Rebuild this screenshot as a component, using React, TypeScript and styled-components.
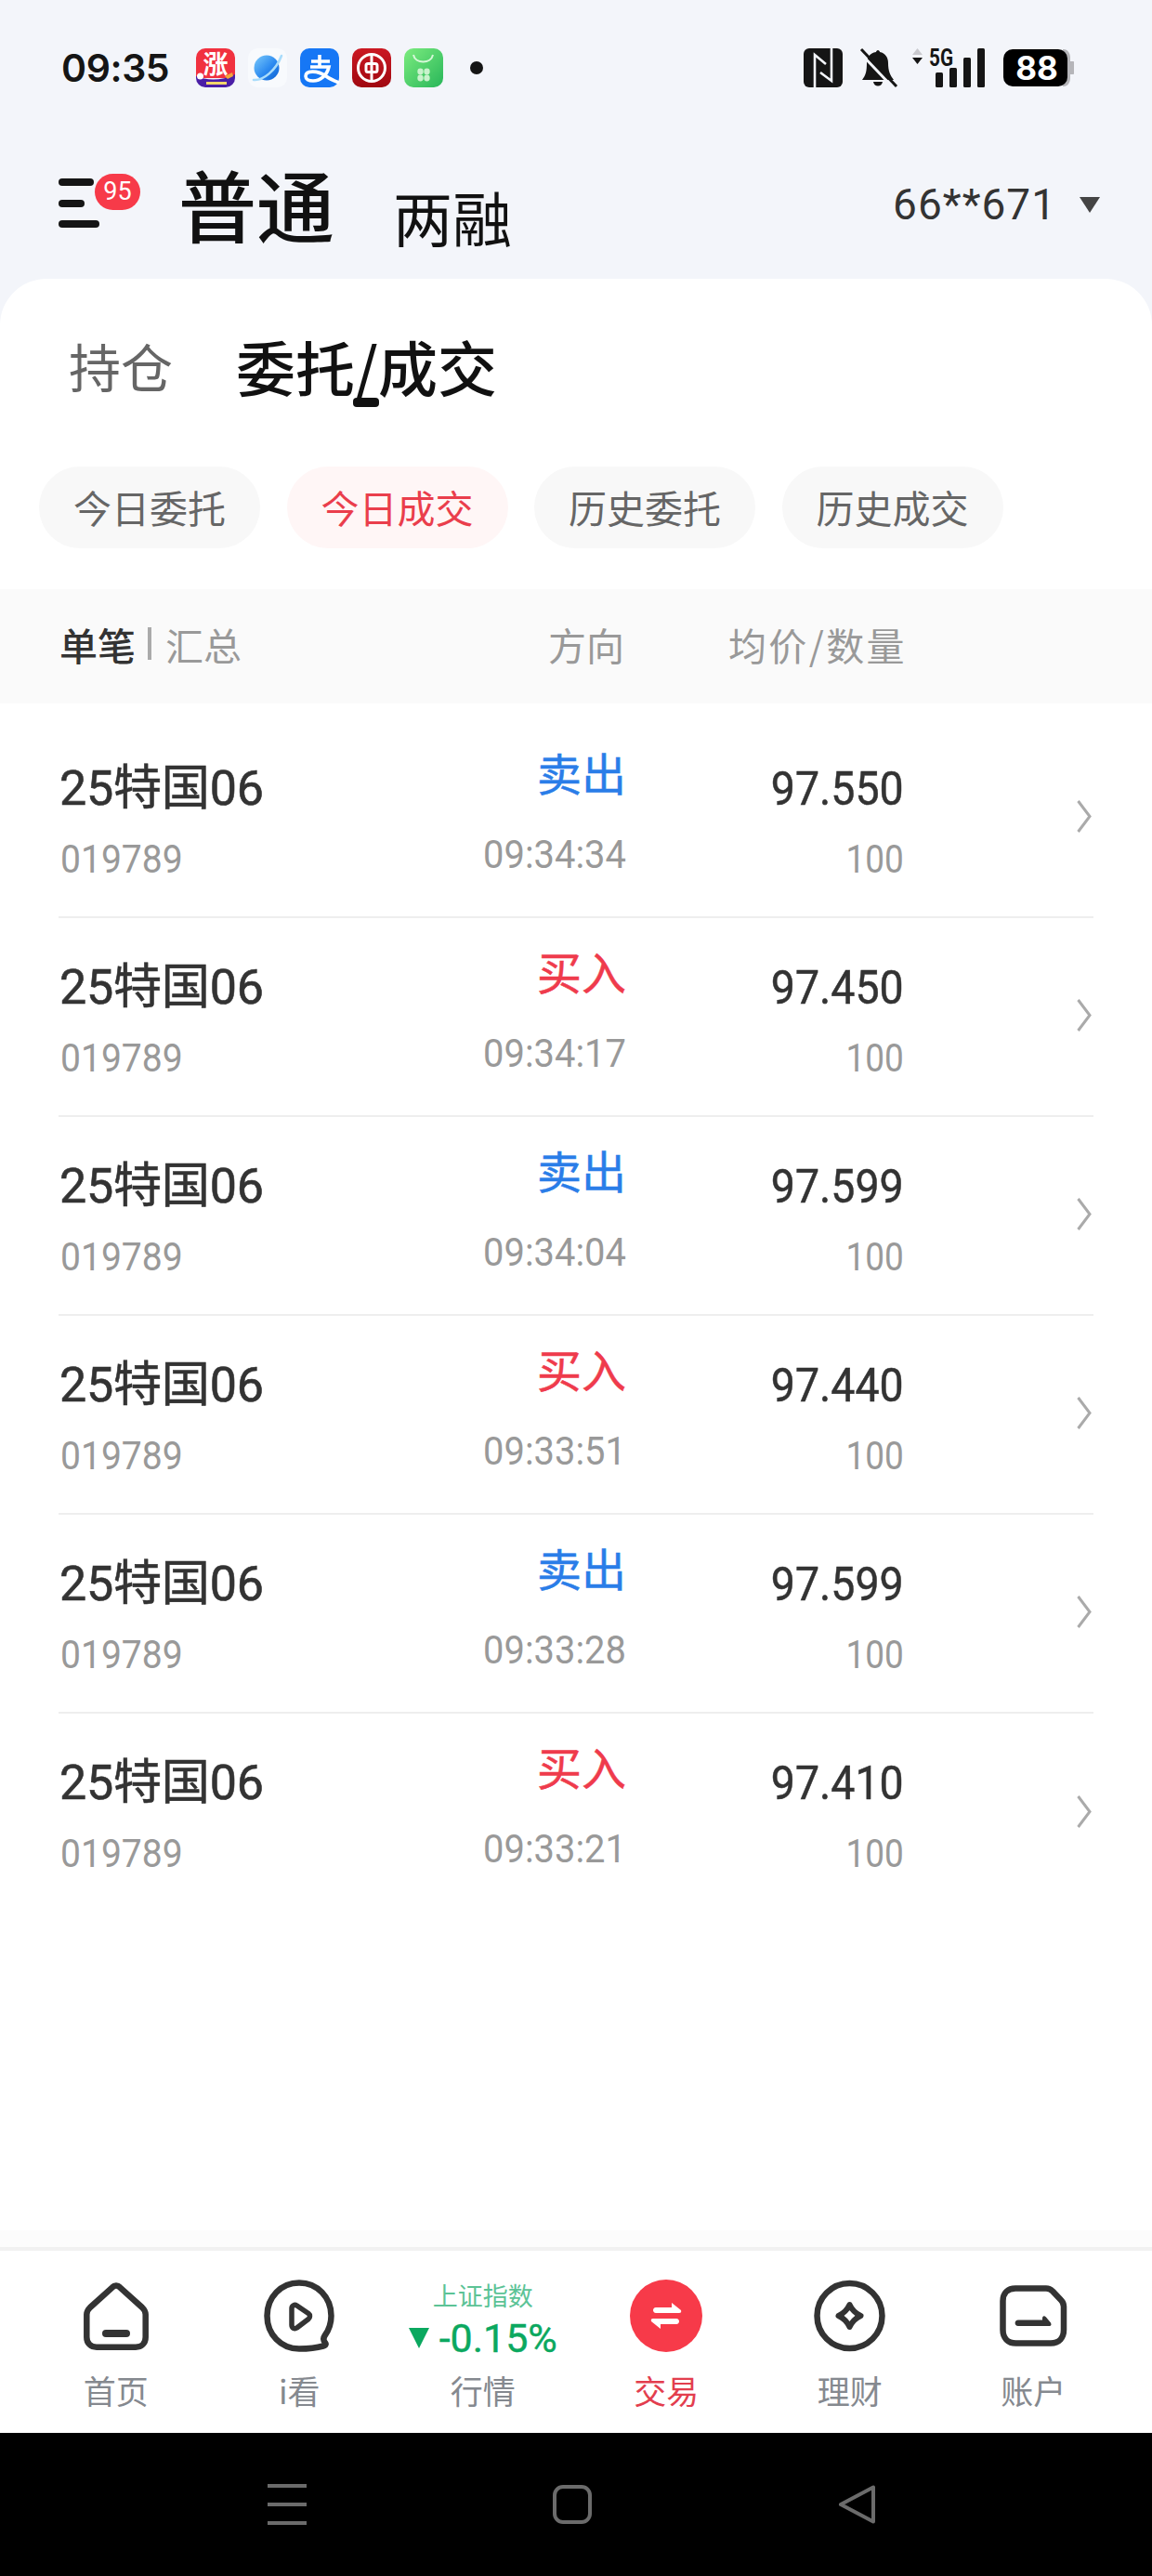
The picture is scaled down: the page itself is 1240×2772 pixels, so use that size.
import styled, { createGlobalStyle } from 'styled-components';

const NUMERIC = 'Roboto, "Noto Sans CJK SC", sans-serif';

const GlobalStyle = createGlobalStyle`
  html, body {
    margin: 0;
    padding: 0;
    background: #f3f5fa;
  }
  body {
    font-family: "Noto Sans CJK SC", "Noto Sans", sans-serif;
  }
`;

const Screen = styled.div`
  width: 1240px;
  height: 2772px;
  display: flex;
  flex-direction: column;
  background: #f3f5fa;
  overflow: hidden;
`;

const StatusBar = styled.div`
  height: 146px;
  flex: none;
  display: flex;
  align-items: center;
  padding: 0 84px 0 66px;
  box-sizing: border-box;
`;

const Clock = styled.span`
  font-family: Inter, sans-serif;
  font-weight: 600;
  font-size: 41px;
  line-height: 1;
  letter-spacing: -0.4px;
  color: #151515;
  width: 145px;
  flex: none;
`;

const AppIcons = styled.div`
  display: flex;
  gap: 14px;
`;

const AppIcon = styled.svg`
  width: 42px;
  height: 42px;
  display: block;
  overflow: visible;
`;

const Dot = styled.span`
  width: 14px;
  height: 14px;
  border-radius: 50%;
  background: #151515;
  margin-left: 29px;
`;

const StatusRight = styled.div`
  margin-left: auto;
  display: flex;
  align-items: center;
`;

const StatusIcon = styled.svg<{ $gap?: number }>`
  display: block;
  overflow: visible;
  margin-left: ${({ $gap }) => $gap ?? 0}px;
`;

const HeaderRow = styled.div`
  height: 154px;
  flex: none;
  display: flex;
  align-items: flex-start;
  padding: 31px 56px 0 63px;
  box-sizing: border-box;
`;

const MenuButton = styled.div`
  position: relative;
  width: 44px;
  height: 53px;
  margin-top: 15px;
  display: flex;
  flex-direction: column;
  justify-content: space-between;
`;

const MenuLine = styled.span<{ $width: number }>`
  display: block;
  height: 8px;
  border-radius: 4px;
  background: #151515;
  width: ${({ $width }) => $width}px;
`;

const MenuBadge = styled.span`
  position: absolute;
  left: 39px;
  top: -5px;
  width: 49px;
  height: 39px;
  border-radius: 20px;
  background: #f73a49;
  color: #fff;
  font-family: ${NUMERIC};
  font-size: 27px;
  line-height: 39px;
  text-align: center;
`;

const ModeActive = styled.span`
  font-size: 84px;
  line-height: 92px;
  font-weight: 500;
  color: #111;
  margin-left: 85px;
  margin-top: -4px;
`;

const ModeIdle = styled.span`
  font-size: 64px;
  line-height: 70px;
  font-weight: 400;
  color: #111;
  margin-left: 63px;
  margin-top: 20px;
`;

const Account = styled.div`
  margin-left: auto;
  display: flex;
  align-items: center;
  margin-top: 18px;
  color: #333;
`;

const AccountText = styled.span`
  font-family: ${NUMERIC};
  font-size: 46px;
  line-height: 50px;
  letter-spacing: 1px;
`;

const Caret = styled.span`
  width: 0;
  height: 0;
  margin-left: 25px;
  border-left: 11px solid transparent;
  border-right: 11px solid transparent;
  border-top: 17px solid #444;
`;

const Sheet = styled.div`
  flex: 1;
  display: flex;
  flex-direction: column;
  background: #fff;
  border-radius: 50px 50px 0 0;
  min-height: 0;
`;

const TopTabs = styled.div`
  height: 135px;
  flex: none;
  display: flex;
  align-items: flex-end;
  padding-left: 74px;
  box-sizing: border-box;
`;

const TopTab = styled.span<{ $active?: boolean }>`
  position: relative;
  font-size: ${({ $active }) => ($active ? 64 : 56)}px;
  line-height: 84px;
  font-weight: ${({ $active }) => ($active ? 500 : 400)};
  color: ${({ $active }) => ($active ? '#111' : '#666')};
  margin-left: ${({ $active }) => ($active ? 68 : 0)}px;
`;

const TabMark = styled.span`
  position: absolute;
  left: 126px;
  bottom: -3px;
  width: 28px;
  height: 10px;
  border-radius: 4px;
  background: #111;
`;

const Chips = styled.div`
  display: flex;
  gap: 28.5px;
  padding: 67px 0 0 42px;
`;

const Chip = styled.span<{ $active?: boolean }>`
  width: 238px;
  height: 88px;
  border-radius: 44px;
  display: flex;
  align-items: center;
  justify-content: center;
  padding-bottom: 2px;
  box-sizing: border-box;
  font-size: 41px;
  background: ${({ $active }) => ($active ? '#fff6f6' : '#f8f8f8')};
  color: ${({ $active }) => ($active ? '#ea3e4c' : '#666')};
`;

const ListHead = styled.div`
  margin-top: 44px;
  height: 123px;
  flex: none;
  box-sizing: border-box;
  display: flex;
  align-items: center;
  background: #fafafa;
  padding: 0 0 6px 64px;
  color: #999;
  font-size: 41px;
`;

const HeadName = styled.div`
  width: 473px;
  display: flex;
  align-items: center;
`;

const HeadStrong = styled.span`
  color: #333;
  font-weight: 500;
`;

const HeadRule = styled.span`
  width: 4px;
  height: 35px;
  background: #aaa;
  margin: 0 15px 0 13px;
`;

const HeadDir = styled.span`
  width: 135px;
  text-align: right;
`;

const HeadPrice = styled.span`
  width: 304px;
  text-align: right;
  letter-spacing: 2.4px;
`;

const Rows = styled.div`
  padding: 17px 63px 0;
`;

const Row = styled.div`
  height: 214px;
  box-sizing: border-box;
  display: flex;
  align-items: stretch;
  border-bottom: 2px solid #eeeeee;
  &:last-child {
    border-bottom: none;
  }
`;

const Cell = styled.div<{ $width: number; $right?: boolean }>`
  width: ${({ $width }) => $width}px;
  display: flex;
  flex-direction: column;
  align-items: ${({ $right }) => ($right ? 'flex-end' : 'flex-start')};
`;

const BondName = styled.span`
  font-family: ${NUMERIC};
  font-size: 52px;
  -webkit-text-stroke: 0.6px #333;
  line-height: 60px;
  letter-spacing: -0.2px;
  color: #333;
  margin-top: 45px;
  margin-left: 1px;
`;

// numbers in the list are set a little condensed, pulled in from their aligned edge
const BondCode = styled.span`
  font-family: ${NUMERIC};
  font-size: 42px;
  line-height: 44px;
  color: #999;
  margin-top: 24px;
  margin-left: 2px;
  transform: scaleX(0.93);
  transform-origin: left center;
`;

const Side = styled.span<{ $buy: boolean }>`
  font-size: 48px;
  -webkit-text-stroke: 0.5px currentColor;
  line-height: 60px;
  margin-top: 26px;
  color: ${({ $buy }) => ($buy ? '#ef3b4c' : '#2a7de8')};
`;

const TradeTime = styled.span`
  font-family: ${NUMERIC};
  font-size: 42px;
  line-height: 44px;
  color: #999;
  margin-top: 38px;
  transform: scaleX(0.95);
  transform-origin: right center;
`;

const Price = styled.span`
  font-family: ${NUMERIC};
  font-size: 50px;
  -webkit-text-stroke: 0.5px #333;
  line-height: 56px;
  color: #333;
  margin-top: 47px;
  transform: scaleX(0.93);
  transform-origin: right center;
`;

const Quantity = styled.span`
  font-family: ${NUMERIC};
  font-size: 42px;
  line-height: 44px;
  color: #999;
  margin-top: 26px;
  transform: scaleX(0.88);
  transform-origin: right center;
`;

const Chevron = styled.svg`
  margin-left: auto;
  margin-right: 2px;
  align-self: center;
  display: block;
  margin-top: -4px;
`;

const TabBar = styled.nav`
  margin-top: auto;
  height: 200px;
  flex: none;
  box-sizing: border-box;
  display: grid;
  grid-template-columns: repeat(6, 197.5px);
  padding-left: 26px;
  border-top: 4px solid #f1f1f1;
  background: #fff;
  box-shadow: 0 -18px 0 #fcfcfc;
`;

const NavItem = styled.div`
  display: flex;
  flex-direction: column;
  align-items: center;
  padding-top: 31px;
`;

const NavGlyph = styled.div`
  height: 78px;
  display: flex;
  align-items: center;
  justify-content: center;
`;

const NavLabel = styled.span<{ $active?: boolean }>`
  font-size: 35px;
  line-height: 44px;
  margin-top: 19px;
  color: ${({ $active }) => ($active ? '#e33e4e' : '#85898f')};
`;

const IndexBlock = styled.div`
  height: 78px;
  display: flex;
  flex-direction: column;
  align-items: center;
`;

const IndexName = styled.span`
  font-size: 27px;
  line-height: 34px;
  color: #5cc396;
`;

const IndexValue = styled.span`
  display: flex;
  align-items: center;
  font-family: ${NUMERIC};
  font-size: 43px;
  -webkit-text-stroke: 0.4px #0ba85f;
  line-height: 46px;
  margin-top: 6px;
  color: #0ba85f;
  white-space: nowrap;
`;

const IndexArrow = styled.span`
  width: 0;
  height: 0;
  margin-right: 11px;
  border-left: 11px solid transparent;
  border-right: 11px solid transparent;
  border-top: 22px solid #0ba85f;
`;

const SystemBar = styled.div`
  height: 154px;
  flex: none;
  background: #000;
  display: flex;
  align-items: center;
  padding: 0 0 0 155px;
`;

const SystemSlot = styled.div`
  width: 307px;
  display: flex;
  justify-content: center;
`;

type Trade = {
  side: '买入' | '卖出';
  time: string;
  price: string;
};

const trades: Trade[] = [
  { side: '卖出', time: '09:34:34', price: '97.550' },
  { side: '买入', time: '09:34:17', price: '97.450' },
  { side: '卖出', time: '09:34:04', price: '97.599' },
  { side: '买入', time: '09:33:51', price: '97.440' },
  { side: '卖出', time: '09:33:28', price: '97.599' },
  { side: '买入', time: '09:33:21', price: '97.410' },
];

const chips = ['今日委托', '今日成交', '历史委托', '历史成交'];

const line = {
  fill: 'none',
  stroke: '#333',
  strokeWidth: 6.5,
  strokeLinejoin: 'round',
  strokeLinecap: 'round',
} as const;

const App = () => (
  <>
    <GlobalStyle />
    <Screen>
      <StatusBar>
        <Clock>09:35</Clock>
        <AppIcons>
          <AppIcon viewBox="0 0 42 42">
            <defs>
              <clipPath id="zhangClip">
                <rect width="42" height="42" rx="10" />
              </clipPath>
            </defs>
            <g clipPath="url(#zhangClip)">
              <rect width="42" height="32" fill="#f1313f" />
              <path d="M0 30c12 5 28 5 42-2v14H0z" fill="#4a1ea6" />
              <circle cx="4.500" cy="30" r="3.500" fill="#fff" />
              <rect x="11" y="36" width="22" height="3" fill="#f2d56b" />
              <path d="M31 30l8-4 1 4-6 3z" fill="#f0a63c" />
            </g>
            <text x="21" y="27" textAnchor="middle" fontFamily="Noto Sans CJK SC" fontWeight="700" fontSize="27" fill="#fff">涨</text>
          </AppIcon>
          <AppIcon viewBox="0 0 42 42">
            <defs>
              <linearGradient id="orbFill" x1="0" y1="0" x2="1" y2="1">
                <stop offset="0" stopColor="#7ccbfb" />
                <stop offset="0.55" stopColor="#2c8af0" />
                <stop offset="1" stopColor="#0a5fd1" />
              </linearGradient>
            </defs>
            <rect width="42" height="42" rx="10" fill="#f8fafd" />
            <circle cx="20" cy="21" r="13.500" fill="url(#orbFill)" />
            <path d="M6 34c10 1 24-10 30-26" stroke="#a9dcfb" strokeWidth="2.600" fill="none" strokeLinecap="round" />
          </AppIcon>
          <AppIcon viewBox="0 0 42 42">
            <rect width="42" height="42" rx="10" fill="#1677f5" />
            <path d="M12 14h20M21 7v13M11 20h20c-2 9-9 15-17 15-5 0-8-2-8-5 0-6 12-7 22 0 4 3 9 5 14 7" stroke="#fff" strokeWidth="3.600" fill="none" />
          </AppIcon>
          <AppIcon viewBox="0 0 42 42">
            <defs>
              <linearGradient id="bankFill" x1="0" y1="0" x2="0" y2="1">
                <stop offset="0" stopColor="#cb1822" />
                <stop offset="1" stopColor="#a00911" />
              </linearGradient>
            </defs>
            <rect width="42" height="42" rx="10" fill="url(#bankFill)" />
            <circle cx="21" cy="21" r="14.500" fill="none" stroke="#fff" strokeWidth="3" />
            <rect x="15" y="16.500" width="12" height="9" rx="2" fill="none" stroke="#fff" strokeWidth="3" />
            <path d="M21 6v30" stroke="#fff" strokeWidth="3" />
          </AppIcon>
          <AppIcon viewBox="0 0 42 42">
            <defs>
              <linearGradient id="storeFill" x1="0" y1="0" x2="1" y2="1">
                <stop offset="0" stopColor="#7cec7f" />
                <stop offset="1" stopColor="#28b659" />
              </linearGradient>
            </defs>
            <rect width="42" height="42" rx="10" fill="url(#storeFill)" />
            <path d="M10 7c2 10 19 10 21 0" stroke="#d6f8d8" strokeWidth="2" fill="none" />
            <ellipse cx="17.500" cy="25" rx="3.200" ry="3.400" fill="#c9f2cc" />
            <ellipse cx="24.500" cy="25" rx="3.200" ry="3.400" fill="#c9f2cc" />
            <ellipse cx="17.500" cy="32" rx="3.200" ry="3.400" fill="#c9f2cc" />
            <ellipse cx="24.500" cy="32" rx="3.200" ry="3.400" fill="#c9f2cc" />
          </AppIcon>
        </AppIcons>
        <Dot />
        <StatusRight>
          <StatusIcon width="42" height="42" viewBox="0 0 42 42">
            <rect width="42" height="42" rx="6" fill="#151515" />
            <path d="M12 42V7l12 10M30 0v35L18 26" stroke="#f3f5fa" strokeWidth="2.600" fill="none" />
          </StatusIcon>
          <StatusIcon $gap={18} width="41" height="42" viewBox="0 0 41 42">
            <path d="M20 2c1 0 2 1 2 2 6 1 9 6 9 12 0 8 2 13 6 18H3c4-5 5-10 5-18 0-6 3-11 10-12 0-1 1-2 2-2z" fill="#151515" />
            <path d="M15 36h10c-1 6-9 6-10 0z" fill="#151515" />
            <path d="M-1 3l38 40" stroke="#f3f5fa" strokeWidth="3" />
            <path d="M2 1l38 40" stroke="#151515" strokeWidth="3" />
          </StatusIcon>
          <StatusIcon $gap={16} width="78" height="42" viewBox="0 0 78 42">
            <path d="M5.500 0L11 7H0z" fill="#c9c9ce" />
            <path d="M5.500 17L11 10H0z" fill="#151515" />
            <text x="18" y="19" fontFamily="Roboto" fontWeight="700" fontSize="26" textLength="26" lengthAdjust="spacingAndGlyphs" fill="#151515">5G</text>
            <rect x="25" y="26" width="8" height="16" rx="1.500" fill="#151515" />
            <rect x="40" y="21" width="8" height="21" rx="1.500" fill="#151515" />
            <rect x="55" y="10" width="8" height="32" rx="1.500" fill="#151515" />
            <rect x="70" y="0" width="8" height="42" rx="1.500" fill="#151515" />
          </StatusIcon>
          <StatusIcon $gap={20} width="76" height="40" viewBox="0 0 76 40">
            <path d="M64 0h1c4 0 7 4 7 9v22c0 5-3 9-7 9h-1z" fill="#b5b5b9" />
            <path d="M72 13h3c.6 0 1 .4 1 1v12c0 .6-.4 1-1 1h-3z" fill="#b5b5b9" />
            <rect width="69" height="40" rx="10" fill="#000" />
            <text x="36" y="32.500" textAnchor="middle" fontFamily="Inter" fontWeight="700" fontSize="35" fill="#fff">88</text>
          </StatusIcon>
        </StatusRight>
      </StatusBar>

      <HeaderRow>
        <MenuButton>
          <MenuLine $width={38} />
          <MenuLine $width={28} />
          <MenuLine $width={44} />
          <MenuBadge>95</MenuBadge>
        </MenuButton>
        <ModeActive>普通</ModeActive>
        <ModeIdle>两融</ModeIdle>
        <Account>
          <AccountText>66**671</AccountText>
          <Caret />
        </Account>
      </HeaderRow>

      <Sheet>
        <TopTabs>
          <TopTab>持仓</TopTab>
          <TopTab $active>
            委托/成交
            <TabMark />
          </TopTab>
        </TopTabs>
        <Chips>
          {chips.map((label, i) => (
            <Chip key={label} $active={i === 1}>{label}</Chip>
          ))}
        </Chips>
        <ListHead>
          <HeadName>
            <HeadStrong>单笔</HeadStrong>
            <HeadRule />
            汇总
          </HeadName>
          <HeadDir>方向</HeadDir>
          <HeadPrice>均价/数量</HeadPrice>
        </ListHead>
        <Rows>
          {trades.map((t, i) => (
            <Row key={i}>
              <Cell $width={300}>
                <BondName>25特国06</BondName>
                <BondCode>019789</BondCode>
              </Cell>
              <Cell $width={311} $right>
                <Side $buy={t.side === '买入'}>{t.side}</Side>
                <TradeTime>{t.time}</TradeTime>
              </Cell>
              <Cell $width={299} $right>
                <Price>{t.price}</Price>
                <Quantity>100</Quantity>
              </Cell>
              <Chevron width="16" height="35" viewBox="0 0 16 35">
                <path d="M1.500 1l12.500 16.500L1.500 34" fill="none" stroke="#aaa" strokeWidth="3" />
              </Chevron>
            </Row>
          ))}
        </Rows>
        <TabBar>
          <NavItem>
            <NavGlyph>
              <svg width="70" height="73" viewBox="0 0 70 73">
                <path {...line} d="M35 3.500c1.700 0 3 .7 4 1.800L63 27c2.400 2.300 3.700 4.600 3.700 7.600V59c0 6.500-4.300 10.700-10.700 10.700H14C7.600 69.700 3.300 65.500 3.300 59V34.600c0-3 1.300-5.300 3.700-7.600L31 5.300c1-1.100 2.300-1.800 4-1.800z" />
                <path d="M24 55h22" fill="none" stroke="#333" strokeWidth="8" strokeLinecap="round" />
              </svg>
            </NavGlyph>
            <NavLabel>首页</NavLabel>
          </NavItem>
          <NavItem>
            <NavGlyph>
              <svg width="76" height="78" viewBox="0 0 76 78">
                <path {...line} d="M38 3.500C57.500 3.500 72.500 19 72.500 39c0 8.500-2.600 15.500-7 21.500-2.500 3.400-1.200 5.500.5 7.500 1.500 2-.2 3-2 3.500C57 73.500 47 74.500 38 74.500 18.500 74.500 3.500 59 3.500 39S18.500 3.500 38 3.500z" />
                <path {...line} strokeWidth={5.5} d="M30 31c0-3 3-4.500 5.500-3l12.500 8.500c2 1.500 2 4.500 0 6l-12.500 9.500c-2.500 1.600-5.500 0-5.500-3z" />
              </svg>
            </NavGlyph>
            <NavLabel>i看</NavLabel>
          </NavItem>
          <NavItem>
            <IndexBlock>
              <IndexName>上证指数</IndexName>
              <IndexValue>
                <IndexArrow />-0.15%
              </IndexValue>
            </IndexBlock>
            <NavLabel>行情</NavLabel>
          </NavItem>
          <NavItem>
            <NavGlyph>
              <svg width="78" height="78" viewBox="0 0 78 78">
                <circle cx="39" cy="39" r="39" fill="#f73a49" />
                <path d="M28 30h17v-5l10 8c.6 1.800 0 3-2 3H28c-4 0-4-6 0-6z" fill="#fff" />
                <path d="M50 48H33v5l-10-8c-.6-1.800 0-3 2-3h25c4 0 4 6 0 6z" fill="#fff" />
              </svg>
            </NavGlyph>
            <NavLabel $active>交易</NavLabel>
          </NavItem>
          <NavItem>
            <NavGlyph>
              <svg width="77" height="78" viewBox="0 0 77 78">
                <circle cx="38.500" cy="39" r="35" {...line} />
                <path {...line} strokeWidth={6} d="M38.500 27c2.500 5.500 6.500 9.500 12 12-5.500 2.500-9.500 6.500-12 12-2.500-5.500-6.500-9.500-12-12 5.500-2.500 9.500-6.500 12-12z" />
              </svg>
            </NavGlyph>
            <NavLabel>理财</NavLabel>
          </NavItem>
          <NavItem>
            <NavGlyph>
              <svg width="73" height="66" viewBox="0 0 73 66">
                <path {...line} d="M17 3.500h33c3 0 5 1 7 3l9 9.500c2 2 3 4 3 7V48c0 8.500-5 14.500-14 14.500H17.500C9 62.500 3.500 57 3.500 48V17C3.500 8.500 9 3.500 17 3.500z" />
                <path d="M20 37.500h26V36c0-3 2-3.500 4-1.500l5 6c1 2 .5 3.500-1.500 3.500H20c-4.500 0-4.500-6.500 0-6.500z" fill="#333" />
              </svg>
            </NavGlyph>
            <NavLabel>账户</NavLabel>
          </NavItem>
        </TabBar>
      </Sheet>

      <SystemBar>
        <SystemSlot>
          <svg width="42" height="44" viewBox="0 0 42 44">
            <path d="M0 2h42M0 22h42M0 42h42" stroke="#6b6b6b" strokeWidth="4" />
          </svg>
        </SystemSlot>
        <SystemSlot>
          <svg width="42" height="42" viewBox="0 0 42 42">
            <rect x="2" y="2" width="38" height="38" rx="9" fill="none" stroke="#6b6b6b" strokeWidth="4" />
          </svg>
        </SystemSlot>
        <SystemSlot>
          <svg width="42" height="42" viewBox="0 0 42 42">
            <path d="M3 21L38 2.500v37z" fill="none" stroke="#6b6b6b" strokeWidth="4" strokeLinejoin="round" />
          </svg>
        </SystemSlot>
      </SystemBar>
    </Screen>
  </>
);

export default App;
